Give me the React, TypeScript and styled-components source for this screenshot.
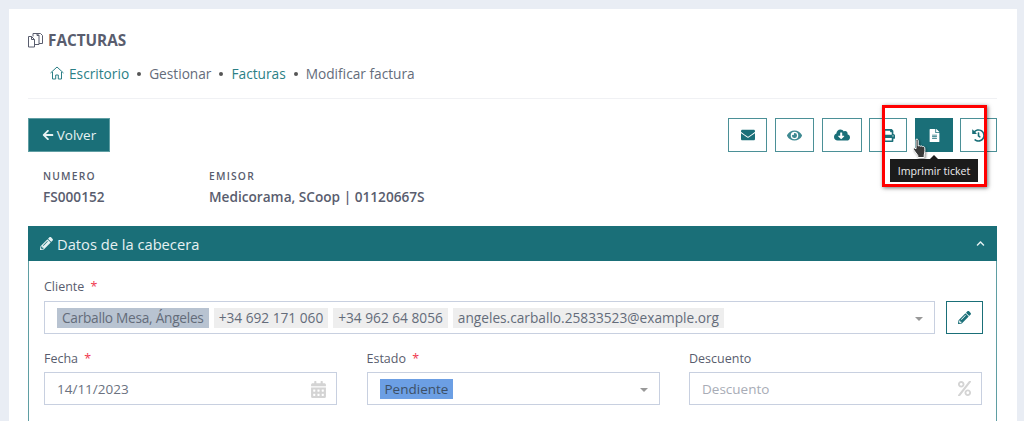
import React from 'react';
import styled, { createGlobalStyle } from 'styled-components';
import {
  FaArrowLeft,
  FaCalendarAlt,
  FaChevronUp,
  FaCloudDownloadAlt,
  FaEnvelope,
  FaEye,
  FaFileAlt,
  FaHistory,
  FaPencilAlt,
  FaPercent,
  FaPrint,
} from 'react-icons/fa';

const GlobalStyle = createGlobalStyle`
  html, body {
    margin: 0;
    height: 421px;
    overflow: hidden;
    background: #e9edf4;
    font-family: "Open Sans", "Liberation Sans", sans-serif;
    color: #595d6e;
  }
  * { box-sizing: border-box; }
`;

const Page = styled.div`
  position: relative;
  margin: 9px 7px 0 9px;
  height: 412px;
  background: #fff;
  padding: 18px 20px 0 19px;
  overflow: hidden;
`;

const Title = styled.h3`
  margin: 0;
  height: 26px;
  display: flex;
  align-items: center;
  gap: 4px;
  font-size: 15.3px;
  font-weight: 700;
  color: #595d6e;
`;

const Crumbs = styled.nav`
  display: flex;
  align-items: center;
  height: 20px;
  margin-top: 10px;
  padding-left: 21px;
  font-size: 13.7px;
`;

const CrumbLink = styled.a`
  color: #2b7f86;
`;

const CrumbText = styled.span`
  color: #646c7a;
`;

const Dot = styled.i`
  width: 4px;
  height: 4px;
  margin: 1px 8px 0 8px;
  border-radius: 50%;
  background: #555;
`;

const Divider = styled.hr`
  margin: 15px 0 0;
  border: 0;
  border-top: 1px solid #f0f1f4;
`;

const Toolbar = styled.div`
  display: flex;
  justify-content: space-between;
  margin-top: 19px;
`;

const BackButton = styled.button`
  display: flex;
  align-items: center;
  justify-content: center;
  gap: 3px;
  width: 82px;
  height: 34px;
  padding: 0;
  border: 1px solid #5f9ea3;
  background: #1a6f78;
  color: #e8f2f3;
  font: 400 13.5px "Open Sans", sans-serif;
`;

const Actions = styled.div`
  display: flex;
  gap: 7px;
`;

const ActionButton = styled.button<{ $w: number; $active?: boolean; $wide?: boolean }>`
  display: flex;
  align-items: center;
  justify-content: center;
  width: ${(p) => p.$w}px;
  height: 34px;
  margin-left: ${(p) => (p.$wide ? '1px' : '0')};
  padding: 0;
  border: 1px solid ${(p) => (p.$active ? '#1a6f78' : '#4b9097')};
  background: ${(p) => (p.$active ? '#1a6f78' : '#fff')};
  color: ${(p) => (p.$active ? '#fff' : '#1a6f78')};
`;

const Meta = styled.div`
  display: flex;
  margin-top: 16px;
  padding-left: 15px;
`;

const MetaCol = styled.div<{ $w?: number }>`
  width: ${(p) => (p.$w ? `${p.$w}px` : 'auto')};
`;

const MetaLabel = styled.div`
  height: 17px;
  font-size: 10.3px;
  line-height: 17px;
  font-weight: 600;
  letter-spacing: 1.2px;
  color: #595d6e;
`;

const MetaValue = styled.div`
  height: 22px;
  margin-top: 1px;
  font-size: 13.65px;
  line-height: 22px;
  font-weight: 600;
  color: #595d6e;
`;

const Panel = styled.section`
  margin-top: 18px;
  height: 200px;
  border: 1px solid #5f9ea3;
  border-bottom: 0;
`;

const PanelHead = styled.header`
  display: flex;
  align-items: center;
  justify-content: space-between;
  height: 35px;
  margin: -1px -1px 0;
  padding: 0 12px;
  background: #1a6f78;
  color: #e6f1f2;
  font-size: 14.7px;
`;

const PanelTitle = styled.span`
  display: flex;
  align-items: center;
  gap: 4px;
`;

const PanelBody = styled.div`
  padding: 17px 13px 0 15px;
`;

const Label = styled.label`
  display: block;
  height: 18px;
  font-size: 12.5px;
  line-height: 18px;
  color: #595d6e;
`;

const Req = styled.span`
  margin-left: 3px;
  color: #f0384f;
`;

const ClientRow = styled.div`
  display: flex;
  gap: 11px;
  margin-top: 5px;
`;

const Box = styled.div`
  position: relative;
  flex: none;
  display: flex;
  align-items: center;
  height: 33px;
  padding: 0 12px;
  border: 1px solid #c8d0e0;
  background: #fff;
  font-size: 13.5px;
  color: #6b7280;
`;

const ClientBox = styled(Box)`
  flex: 1;
  font-size: 13.7px;
`;

const Tag = styled.span<{ $bg: string; $color?: string; $tight?: boolean }>`
  height: 20px;
  margin-right: 5px;
  padding: 0 5px;
  line-height: 20px;
  white-space: nowrap;
  letter-spacing: ${(p) => (p.$tight ? '-0.27px' : 'normal')};
  background: ${(p) => p.$bg};
  color: ${(p) => p.$color || '#646c7a'};
`;

const Caret = styled.i`
  position: absolute;
  right: 11px;
  top: 15px;
  border-left: 4px solid transparent;
  border-right: 4px solid transparent;
  border-top: 4px solid #999;
`;

const EditButton = styled.button`
  display: flex;
  align-items: center;
  justify-content: center;
  width: 37px;
  height: 33px;
  padding: 0;
  border: 1px solid #1a6f78;
  background: #fff;
  color: #1a6f78;
`;

const FieldRow = styled.div`
  display: grid;
  grid-template-columns: repeat(3, 293px);
  column-gap: 29.5px;
  margin-top: 16px;
`;

const Field = styled.div`
  display: flex;
  flex-direction: column;
  gap: 4px;
`;

const Placeholder = styled.span`
  color: #a8acb6;
`;

const TailIcon = styled.span`
  position: absolute;
  right: 9px;
  top: 8px;
  display: flex;
  color: #d4d4d4;
  font-size: 17px;
`;

const Tooltip = styled.div`
  position: absolute;
  left: 881px;
  top: 150px;
  display: flex;
  align-items: center;
  justify-content: center;
  width: 88px;
  height: 23px;
  background: #1b1b1b;
  color: #eee;
  font-size: 10.6px;
  &::before {
    content: '';
    position: absolute;
    top: -4px;
    left: 40px;
    border-left: 4px solid transparent;
    border-right: 4px solid transparent;
    border-bottom: 4px solid #1b1b1b;
  }
`;

const Highlight = styled.div`
  position: absolute;
  left: 873px;
  top: 96px;
  width: 105px;
  height: 82px;
  border: 3px solid #f00;
  box-shadow: 1px 1px 4px rgba(0, 0, 0, 0.55);
`;

const Cursor = styled.svg`
  position: absolute;
  left: 903px;
  top: 129px;
  filter: drop-shadow(1px 1px 1px rgba(0, 0, 0, 0.45));
`;

const FilesIcon = () => (
  <svg width="16" height="16" viewBox="0 0 16 16" fill="none" stroke="#595d6e" strokeWidth="1">
    <path d="M0.5 4.5h3l3 3v7.5h-6z M3.5 4.5v3h3" />
    <path d="M5 4.5V1.5h4l2 2v9H7 M9 1.5h3.5l2 2v8H11 M11 3.5H9V1.5" />
  </svg>
);

const HomeIcon = () => (
  <svg width="16" height="16" viewBox="0 0 16 16" fill="none" stroke="#2b7f86" strokeWidth="1" style={{ marginRight: 4 }}>
    <path d="M1.5 8L8 2l6.5 6" />
    <path d="M3.5 7v7h3.2v-4h2.6v4h3.2V7" />
  </svg>
);

const App = () => {
  return (
    <>
      <GlobalStyle />
      <Page>
        <Title>
          <FilesIcon />
          FACTURAS
        </Title>
        <Crumbs>
          <HomeIcon />
          <CrumbLink>Escritorio</CrumbLink>
          <Dot />
          <CrumbText>Gestionar</CrumbText>
          <Dot />
          <CrumbLink>Facturas</CrumbLink>
          <Dot />
          <CrumbText>Modificar factura</CrumbText>
        </Crumbs>
        <Divider />
        <Toolbar>
          <BackButton>
            <FaArrowLeft size={12} />
            Volver
          </BackButton>
          <Actions>
            <ActionButton $w={39}><FaEnvelope size={14} /></ActionButton>
            <ActionButton $w={39} $wide><FaEye size={15} color="#3f8a92" /></ActionButton>
            <ActionButton $w={40} $wide><FaCloudDownloadAlt size={16} /></ActionButton>
            <ActionButton $w={38}><FaPrint size={13} /></ActionButton>
            <ActionButton $w={38} $active $wide><FaFileAlt size={13} /></ActionButton>
            <ActionButton $w={37}><FaHistory size={13} /></ActionButton>
          </Actions>
        </Toolbar>
        <Meta>
          <MetaCol $w={166}>
            <MetaLabel>NUMERO</MetaLabel>
            <MetaValue>FS000152</MetaValue>
          </MetaCol>
          <MetaCol>
            <MetaLabel>EMISOR</MetaLabel>
            <MetaValue>Medicorama, SCoop | 01120667S</MetaValue>
          </MetaCol>
        </Meta>
        <Panel>
          <PanelHead>
            <PanelTitle>
              <FaPencilAlt size={13} />
              Datos de la cabecera
            </PanelTitle>
            <FaChevronUp size={9} />
          </PanelHead>
          <PanelBody>
            <Label>Cliente <Req>*</Req></Label>
            <ClientRow>
              <ClientBox>
                <Tag $bg="#b8c3d1" $tight>Carballo Mesa, Ángeles</Tag>
                <Tag $bg="#eeeeee">+34 692 171 060</Tag>
                <Tag $bg="#eeeeee">+34 962 64 8056</Tag>
                <Tag $bg="#eeeeee">angeles.carballo.25833523@example.org</Tag>
                <Caret />
              </ClientBox>
              <EditButton><FaPencilAlt size={13} /></EditButton>
            </ClientRow>
            <FieldRow>
              <Field>
                <Label>Fecha <Req>*</Req></Label>
                <Box>
                  14/11/2023
                  <TailIcon><FaCalendarAlt /></TailIcon>
                </Box>
              </Field>
              <Field>
                <Label>Estado <Req>*</Req></Label>
                <Box>
                  <Tag $bg="#6c9fe4" $color="#3d5066">Pendiente</Tag>
                  <Caret />
                </Box>
              </Field>
              <Field>
                <Label>Descuento</Label>
                <Box>
                  <Placeholder>Descuento</Placeholder>
                  <TailIcon><FaPercent size={15} /></TailIcon>
                </Box>
              </Field>
            </FieldRow>
          </PanelBody>
        </Panel>
        <Tooltip>Imprimir ticket</Tooltip>
        <Highlight />
        <Cursor width="16" height="21" viewBox="0 0 16 21">
          <path
            d="M4 1.5c1-.8 2.2 0 2.2 1V8c.8-.5 1.7-.4 2.2.2.7-.5 1.7-.3 2.1.4.8-.4 1.8 0 2.1.8.5 1.5.4 5-.4 7.6v2.5H5.8v-2L1.8 12c-.8-1-.2-2.2 1-2l1.2.8V2.5z"
            fill="#3a3a3a"
            stroke="#fff"
            strokeWidth="1"
          />
        </Cursor>
      </Page>
    </>
  );
};

export default App;
